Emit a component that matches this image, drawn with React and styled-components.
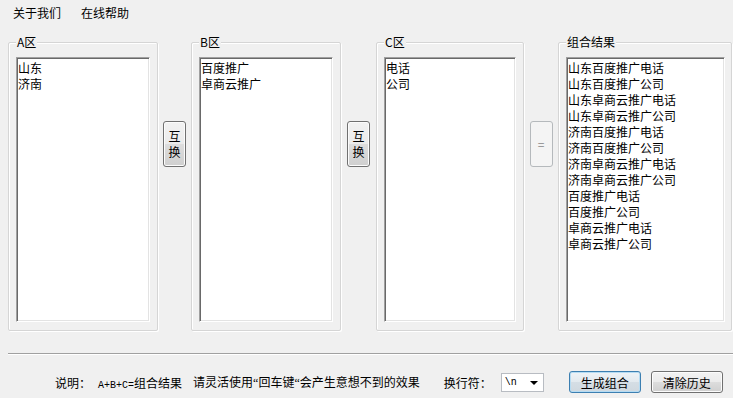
import React from "react";
import styled, { createGlobalStyle } from "styled-components";

const Global = createGlobalStyle`
  html, body { margin: 0; padding: 0; background: #f0f0f0; }
  body { font-family: "Noto Sans CJK SC", "Liberation Sans", sans-serif; font-size: 12px; color: #000; }
`;

const Window = styled.div`
  width: 733px;
  height: 398px;
  display: flex;
  flex-direction: column;
  background: #f0f0f0;
  overflow: hidden;
`;

const MenuBar = styled.div`
  height: 26px;
  display: flex;
  align-items: center;
  gap: 20px;
  padding-left: 13px;
  font-size: 12px;
  line-height: 26px;
`;

const MenuItem = styled.span`
  white-space: nowrap;
`;

const Main = styled.div`
  display: flex;
  margin-top: 16px;
  padding-left: 8px;
  height: 289px;
`;

const Group = styled.div`
  position: relative;
  box-sizing: border-box;
  width: ${(p) => p.$w}px;
  height: 100%;
  border: 1px solid #d5d5d5;
  border-radius: 2px;
  box-shadow: inset 1px 1px 0 #fff, 1px 1px 0 #fff;
  padding: 14px ${(p) => p.$pr ?? 7}px 8px 7px;
  display: flex;
`;

const Legend = styled.span`
  position: absolute;
  top: -9px;
  left: 7px;
  padding: 0 1px;
  background: #f0f0f0;
  font-size: 12px;
  line-height: 16px;
  white-space: nowrap;
`;

const ListBox = styled.div`
  flex: 1;
  background: #fff;
  border: 1px solid;
  border-color: #a0a0a0 #ffffff #ffffff #a0a0a0;
  box-shadow: inset 1px 1px 0 #696969, inset -1px -1px 0 #e3e3e3;
  padding: 2px 1px 2px 1px;
  font-size: 12px;
  line-height: 16px;
  overflow: hidden;
`;

const ListItem = styled.div`
  white-space: nowrap;
  height: 16px;
`;

const ButtonColumn = styled.div`
  width: ${(p) => p.$w}px;
  display: flex;
  justify-content: center;
  align-items: flex-start;
  padding-top: 79px;
`;

const SwapButton = styled.div`
  box-sizing: border-box;
  width: 23px;
  height: 46px;
  border: 1px solid ${(p) => (p.$disabled ? "#b5b9bc" : "#707070")};
  border-radius: 3px;
  background: ${(p) =>
    p.$disabled
      ? "#f4f4f4"
      : "linear-gradient(#f2f2f2 0%, #ebebeb 50%, #dddddd 51%, #cfcfcf 100%)"};
  box-shadow: inset 0 0 0 1px ${(p) => (p.$disabled ? "#f4f4f4" : "#fcfcfc")};
  color: ${(p) => (p.$disabled ? "#8a8a8a" : "#000")};
  display: flex;
  flex-direction: column;
  align-items: center;
  justify-content: center;
  font-size: 12px;
`;

const Glyph = styled.span`
  display: block;
  height: 16px;
  line-height: 16px;
`;

const Separator = styled.div`
  margin: 22px 0 0 8px;
  height: 1px;
  background: #a0a0a0;
  border-bottom: 1px solid #ffffff;
`;

const BottomRow = styled.div`
  display: flex;
  align-items: center;
  height: 22px;
  margin-top: 16px;
  padding-left: 55px;
  font-size: 12px;
  white-space: nowrap;
`;

const Text = styled.span`
  margin-left: ${(p) => p.$ml || 0}px;
  white-space: nowrap;
`;

const Mono = styled.span`
  font-family: "Liberation Mono", "DejaVu Sans Mono", monospace;
  font-size: 10px;
`;

const Quote = styled.span`
  font-family: "Liberation Serif", serif;
  font-size: 12px;
`;

const Select = styled.div`
  box-sizing: border-box;
  margin-left: 9px;
  width: 43px;
  height: 19px;
  background: #fff;
  border: 1px solid #b8bcc2;
  display: flex;
  align-items: center;
  justify-content: space-between;
  padding: 0 5px 0 3px;
  font-family: "Liberation Mono", monospace;
  font-size: 10px;
`;

const Arrow = styled.span`
  width: 0;
  height: 0;
  border-left: 4px solid transparent;
  border-right: 4px solid transparent;
  border-top: 4px solid #000;
  margin-top: 1px;
`;

const PushButton = styled.div`
  box-sizing: border-box;
  margin-left: ${(p) => p.$ml}px;
  width: 72px;
  height: 22px;
  border: 1px solid ${(p) => (p.$default ? "#3c7fb1" : "#707070")};
  border-radius: 3px;
  background: ${(p) =>
    p.$default
      ? "linear-gradient(#eef3f7 0%, #e2e9ee 50%, #d5dee5 51%, #cfd8df 100%)"
      : "linear-gradient(#f2f2f2 0%, #ebebeb 50%, #dddddd 51%, #cfcfcf 100%)"};
  box-shadow: inset 0 0 0 1px ${(p) => (p.$default ? "#b6dcf3" : "#fcfcfc")};
  display: flex;
  align-items: center;
  justify-content: center;
  font-size: 12px;
`;

const groups = {
  a: ["山东", "济南"],
  b: ["百度推广", "卓商云推广"],
  c: ["电话", "公司"],
};

const results = [];
groups.a.forEach((x) => groups.b.forEach((y) => groups.c.forEach((z) => results.push(x + y + z))));
groups.b.forEach((y) => groups.c.forEach((z) => results.push(y + z)));

function List({ items }) {
  return (
    <ListBox>
      {items.map((t, i) => (
        <ListItem key={i}>{t}</ListItem>
      ))}
    </ListBox>
  );
}

export default function App() {
  return (
    <>
      <Global />
      <Window>
        <MenuBar>
          <MenuItem>关于我们</MenuItem>
          <MenuItem>在线帮助</MenuItem>
        </MenuBar>
        <Main>
          <Group $w={150}>
            <Legend>A区</Legend>
            <List items={groups.a} />
          </Group>
          <ButtonColumn $w={33}>
            <SwapButton>
              <Glyph>互</Glyph>
              <Glyph>换</Glyph>
            </SwapButton>
          </ButtonColumn>
          <Group $w={150}>
            <Legend>B区</Legend>
            <List items={groups.b} />
          </Group>
          <ButtonColumn $w={35}>
            <SwapButton>
              <Glyph>互</Glyph>
              <Glyph>换</Glyph>
            </SwapButton>
          </ButtonColumn>
          <Group $w={148}>
            <Legend>C区</Legend>
            <List items={groups.c} />
          </Group>
          <ButtonColumn $w={34}>
            <SwapButton $disabled>
              <Glyph>=</Glyph>
            </SwapButton>
          </ButtonColumn>
          <Group $w={174} $pr={6}>
            <Legend>组合结果</Legend>
            <List items={results} />
          </Group>
        </Main>
        <Separator />
        <BottomRow>
          <Text>说明：</Text>
          <Text $ml={7}>
            <Mono>A+B+C=</Mono>组合结果
          </Text>
          <Text $ml={11}>
            请灵活使用<Quote>“</Quote>回车键<Quote>“</Quote>会产生意想不到的效果
          </Text>
          <Text $ml={24}>换行符：</Text>
          <Select>
            <span>\n</span>
            <Arrow />
          </Select>
          <PushButton $ml={25} $default>
            生成组合
          </PushButton>
          <PushButton $ml={10}>清除历史</PushButton>
        </BottomRow>
      </Window>
    </>
  );
}
